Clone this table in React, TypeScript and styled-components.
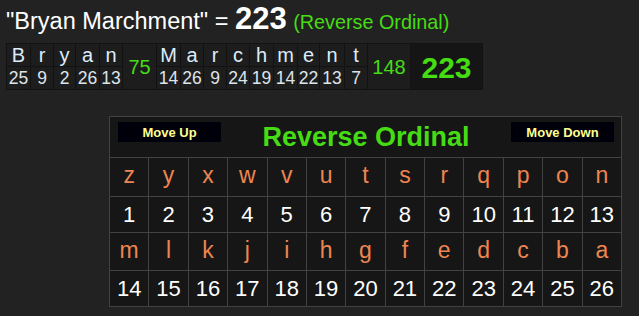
import React from 'react';
import styled, { createGlobalStyle } from 'styled-components';

const GlobalStyle = createGlobalStyle`
  html, body {
    margin: 0;
    padding: 0;
    background: #222222;
  }
  body {
    font-family: 'Liberation Sans', Arial, sans-serif;
    color: #ffffff;
  }
`;

const GREEN = '#46dc14';
const ORANGE = '#ee8550';

const Page = styled.div`
  padding: 0 6px;
  width: 639px;
  height: 316px;
  box-sizing: border-box;
  overflow: hidden;
`;

const Title = styled.div`
  height: 43px;
  box-sizing: border-box;
  padding-top: 1px;
  font-size: 23.5px;
  line-height: 36px;
  white-space: nowrap;
`;

const TitleTotal = styled.span`
  font-size: 31px;
  font-weight: bold;
`;

const TitleCipher = styled.span`
  font-size: 19.8px;
  color: ${GREEN};
`;

const Breakdown = styled.div`
  display: inline-grid;
  grid-auto-flow: column;
  grid-template-rows: 22px 22px;
  grid-template-columns: 23px 22px 21px 23px 22px 33px 23px 22px 22px 22px 23px 23px 21px 24px 22px 42px 71px;
  gap: 1px;
  padding: 1px;
  background: #121212;
`;

const BreakCell = styled.div<{ $kind: 'letter' | 'number' }>`
  background: #1d1d1d;
  display: flex;
  align-items: center;
  justify-content: center;
  font-size: ${({ $kind }) => ($kind === 'letter' ? '20px' : '17.5px')};
  line-height: 1;
  color: ${({ $kind }) => ($kind === 'letter' ? '#dcecfb' : '#dde4ea')};
  padding-top: ${({ $kind }) => ($kind === 'letter' ? '0' : '1px')};
`;

const SumCell = styled.div<{ $grand?: boolean }>`
  grid-row: span 2;
  background: ${({ $grand }) => ($grand ? '#151515' : '#1d1d1d')};
  display: flex;
  align-items: center;
  justify-content: center;
  color: ${GREEN};
  font-size: ${({ $grand }) => ($grand ? '30px' : '20px')};
  font-weight: ${({ $grand }) => ($grand ? 'bold' : 'normal')};
  padding-top: 2px;
`;

const Chart = styled.div`
  margin: 26px 0 0 103px;
  width: 513px;
  display: grid;
  grid-template-columns: repeat(13, 1fr);
  grid-template-rows: 40px 38px 35px 37px 35px;
  gap: 1px;
  padding: 1px;
  box-sizing: border-box;
  background: #424242;
`;

const ChartHeader = styled.div`
  grid-column: 1 / -1;
  background: #161616;
  display: flex;
  justify-content: space-between;
  align-items: flex-start;
  padding: 5px 7px 0 8px;
`;

const MoveButton = styled.button`
  width: 103px;
  height: 20px;
  border: none;
  padding: 0;
  background: #00000a;
  color: #ffff90;
  font-family: 'Liberation Sans', Arial, sans-serif;
  font-size: 13px;
  font-weight: bold;
  cursor: pointer;
`;

const ChartTitle = styled.div`
  font-size: 27px;
  line-height: 31px;
  font-weight: bold;
  color: ${GREEN};
`;

const ChartCell = styled.div<{ $kind: 'letter' | 'number' }>`
  background: #161616;
  display: flex;
  align-items: center;
  justify-content: center;
  font-size: ${({ $kind }) => ($kind === 'letter' ? '23px' : '22px')};
  color: ${({ $kind }) => ($kind === 'letter' ? ORANGE : '#ffffff')};
  padding-bottom: ${({ $kind }) => ($kind === 'letter' ? '3px' : '0')};
`;

const reverseValue = (ch: string) => 27 - (ch.toLowerCase().charCodeAt(0) - 96);

const name = 'Bryan Marchment';
const words = name.split(' ');
const wordSums = words.map(w => w.split('').reduce((s, c) => s + reverseValue(c), 0));
const total = wordSums.reduce((a, b) => a + b, 0);

const alphabet = 'zyxwvutsrqponmlkjihgfedcba'.split('');
const chartRows = [alphabet.slice(0, 13), alphabet.slice(13)];

const App: React.FC = () => {
  return (
    <Page>
      <GlobalStyle />
      <Title>
        "{name}" = <TitleTotal>{total}</TitleTotal> <TitleCipher>(Reverse Ordinal)</TitleCipher>
      </Title>
      <Breakdown>
        {words.map((word, wi) => (
          <React.Fragment key={wi}>
            {word.split('').map((ch, ci) => (
              <React.Fragment key={ci}>
                <BreakCell $kind="letter">{ch}</BreakCell>
                <BreakCell $kind="number">{reverseValue(ch)}</BreakCell>
              </React.Fragment>
            ))}
            <SumCell>{wordSums[wi]}</SumCell>
          </React.Fragment>
        ))}
        <SumCell $grand>{total}</SumCell>
      </Breakdown>
      <Chart>
        <ChartHeader>
          <MoveButton>Move Up</MoveButton>
          <ChartTitle>Reverse Ordinal</ChartTitle>
          <MoveButton>Move Down</MoveButton>
        </ChartHeader>
        {chartRows.map((row, ri) => (
          <React.Fragment key={ri}>
            {row.map(ch => (
              <ChartCell key={ch} $kind="letter">{ch}</ChartCell>
            ))}
            {row.map(ch => (
              <ChartCell key={ch + 'n'} $kind="number">{reverseValue(ch)}</ChartCell>
            ))}
          </React.Fragment>
        ))}
      </Chart>
    </Page>
  );
};

export default App;
